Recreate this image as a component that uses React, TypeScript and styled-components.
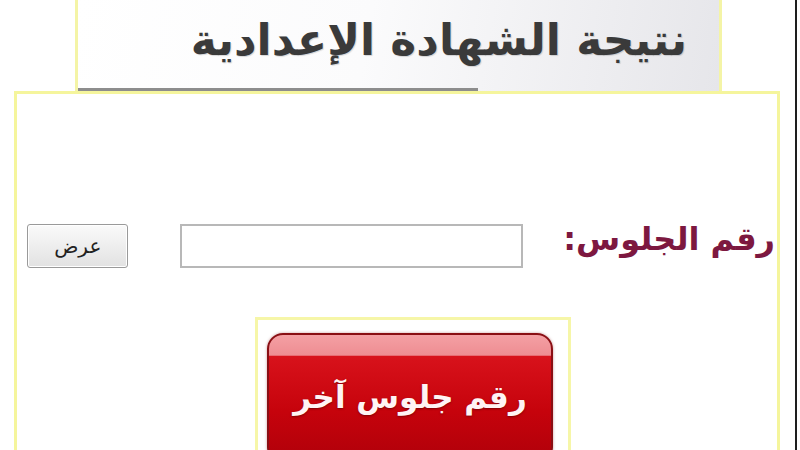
import styled, { createGlobalStyle } from "styled-components";

const GlobalStyle = createGlobalStyle`
  html, body {
    margin: 0;
    padding: 0;
    background: #ffffff;
  }
  body {
    font-family: "DejaVu Sans", "Noto Sans", sans-serif;
  }
`;

export default function App() {
  return (
    <>
      <GlobalStyle />
      <Page>
        <Header>
          <Title>نتيجة الشهادة الإعدادية</Title>
          <HeaderRule />
        </Header>
        <Panel>
          <SearchRow>
            <Label>رقم الجلوس:</Label>
            <NumberInput type="text" />
            <ShowButton>عرض</ShowButton>
          </SearchRow>
          <AgainFrame>
            <AgainButton>رقم جلوس آخر</AgainButton>
          </AgainFrame>
        </Panel>
      </Page>
    </>
  );
}

const Page = styled.div`
  width: 795px;
  height: 450px;
  overflow: hidden;
  border-right: 2px solid #1e1e1e;
  background: #fff;
`;

const Header = styled.div`
  margin-left: 75px;
  width: 641px;
  height: 91px;
  border-left: 3px solid #f4f4a6;
  border-right: 3px solid #f4f4a6;
  background: linear-gradient(100deg, #ffffff 0%, #fbfbfc 45%, #e6e6ea 100%);
  display: flex;
  flex-direction: column;
  justify-content: flex-end;
`;

const Title = styled.h1`
  margin: 0 0 26px 0;
  padding-right: 32px;
  direction: rtl;
  text-align: right;
  font-family: "DejaVu Sans", sans-serif;
  font-weight: bold;
  font-size: 44px;
  line-height: 1;
  color: #3a3a3a;
  text-shadow: 1px 1px 1px rgba(0, 0, 0, 0.15);
`;

const HeaderRule = styled.div`
  width: 400px;
  height: 3px;
  background: #8d8d8d;
`;

const Panel = styled.div`
  margin-left: 14px;
  width: 760px;
  height: 400px;
  border: 3px solid #f5f59c;
  border-bottom: none;
  display: flex;
  flex-direction: column;
`;

const SearchRow = styled.div`
  direction: rtl;
  display: flex;
  align-items: center;
  padding: 128px 2px 0 0;
  height: 48px;
`;

const Label = styled.span`
  font-family: "DejaVu Sans", sans-serif;
  font-weight: bold;
  font-size: 32px;
  color: #7d1840;
  margin: -14px 0 0 40px;
  white-space: nowrap;
`;

const NumberInput = styled.input`
  box-sizing: border-box;
  width: 343px;
  height: 44px;
  border: 2px solid #b8b8b8;
  background: #fff;
  margin-left: 52px;
`;

const ShowButton = styled.button`
  box-sizing: border-box;
  width: 101px;
  height: 44px;
  border: 1px solid #9a9a9a;
  border-radius: 3px;
  background: linear-gradient(#fafafa, #e2e2e2);
  font-family: "DejaVu Sans", sans-serif;
  font-size: 20px;
  color: #222;
  box-shadow: inset 0 0 0 1px #fff;
`;

const AgainFrame = styled.div`
  margin: 47px 0 0 238px;
  box-sizing: border-box;
  width: 316px;
  height: 160px;
  border: 3px solid #f6f6a8;
  border-bottom: none;
  padding: 13px 0 0 9px;
`;

const AgainButton = styled.div`
  box-sizing: border-box;
  width: 286px;
  height: 130px;
  border: 2px solid #8a0f14;
  border-radius: 16px;
  background: linear-gradient(
    #f4a0a4 0%,
    #ee8d92 16%,
    #d8121b 17%,
    #c6030c 60%,
    #b0000a 100%
  );
  display: flex;
  justify-content: center;
  padding-top: 44px;
  direction: rtl;
  font-family: "DejaVu Sans", sans-serif;
  font-weight: bold;
  font-size: 31px;
  color: #fff4f4;
  text-shadow: 0 1px 2px rgba(80, 0, 0, 0.6);
  box-shadow: 0 0 3px rgba(120, 0, 0, 0.4);
`;
